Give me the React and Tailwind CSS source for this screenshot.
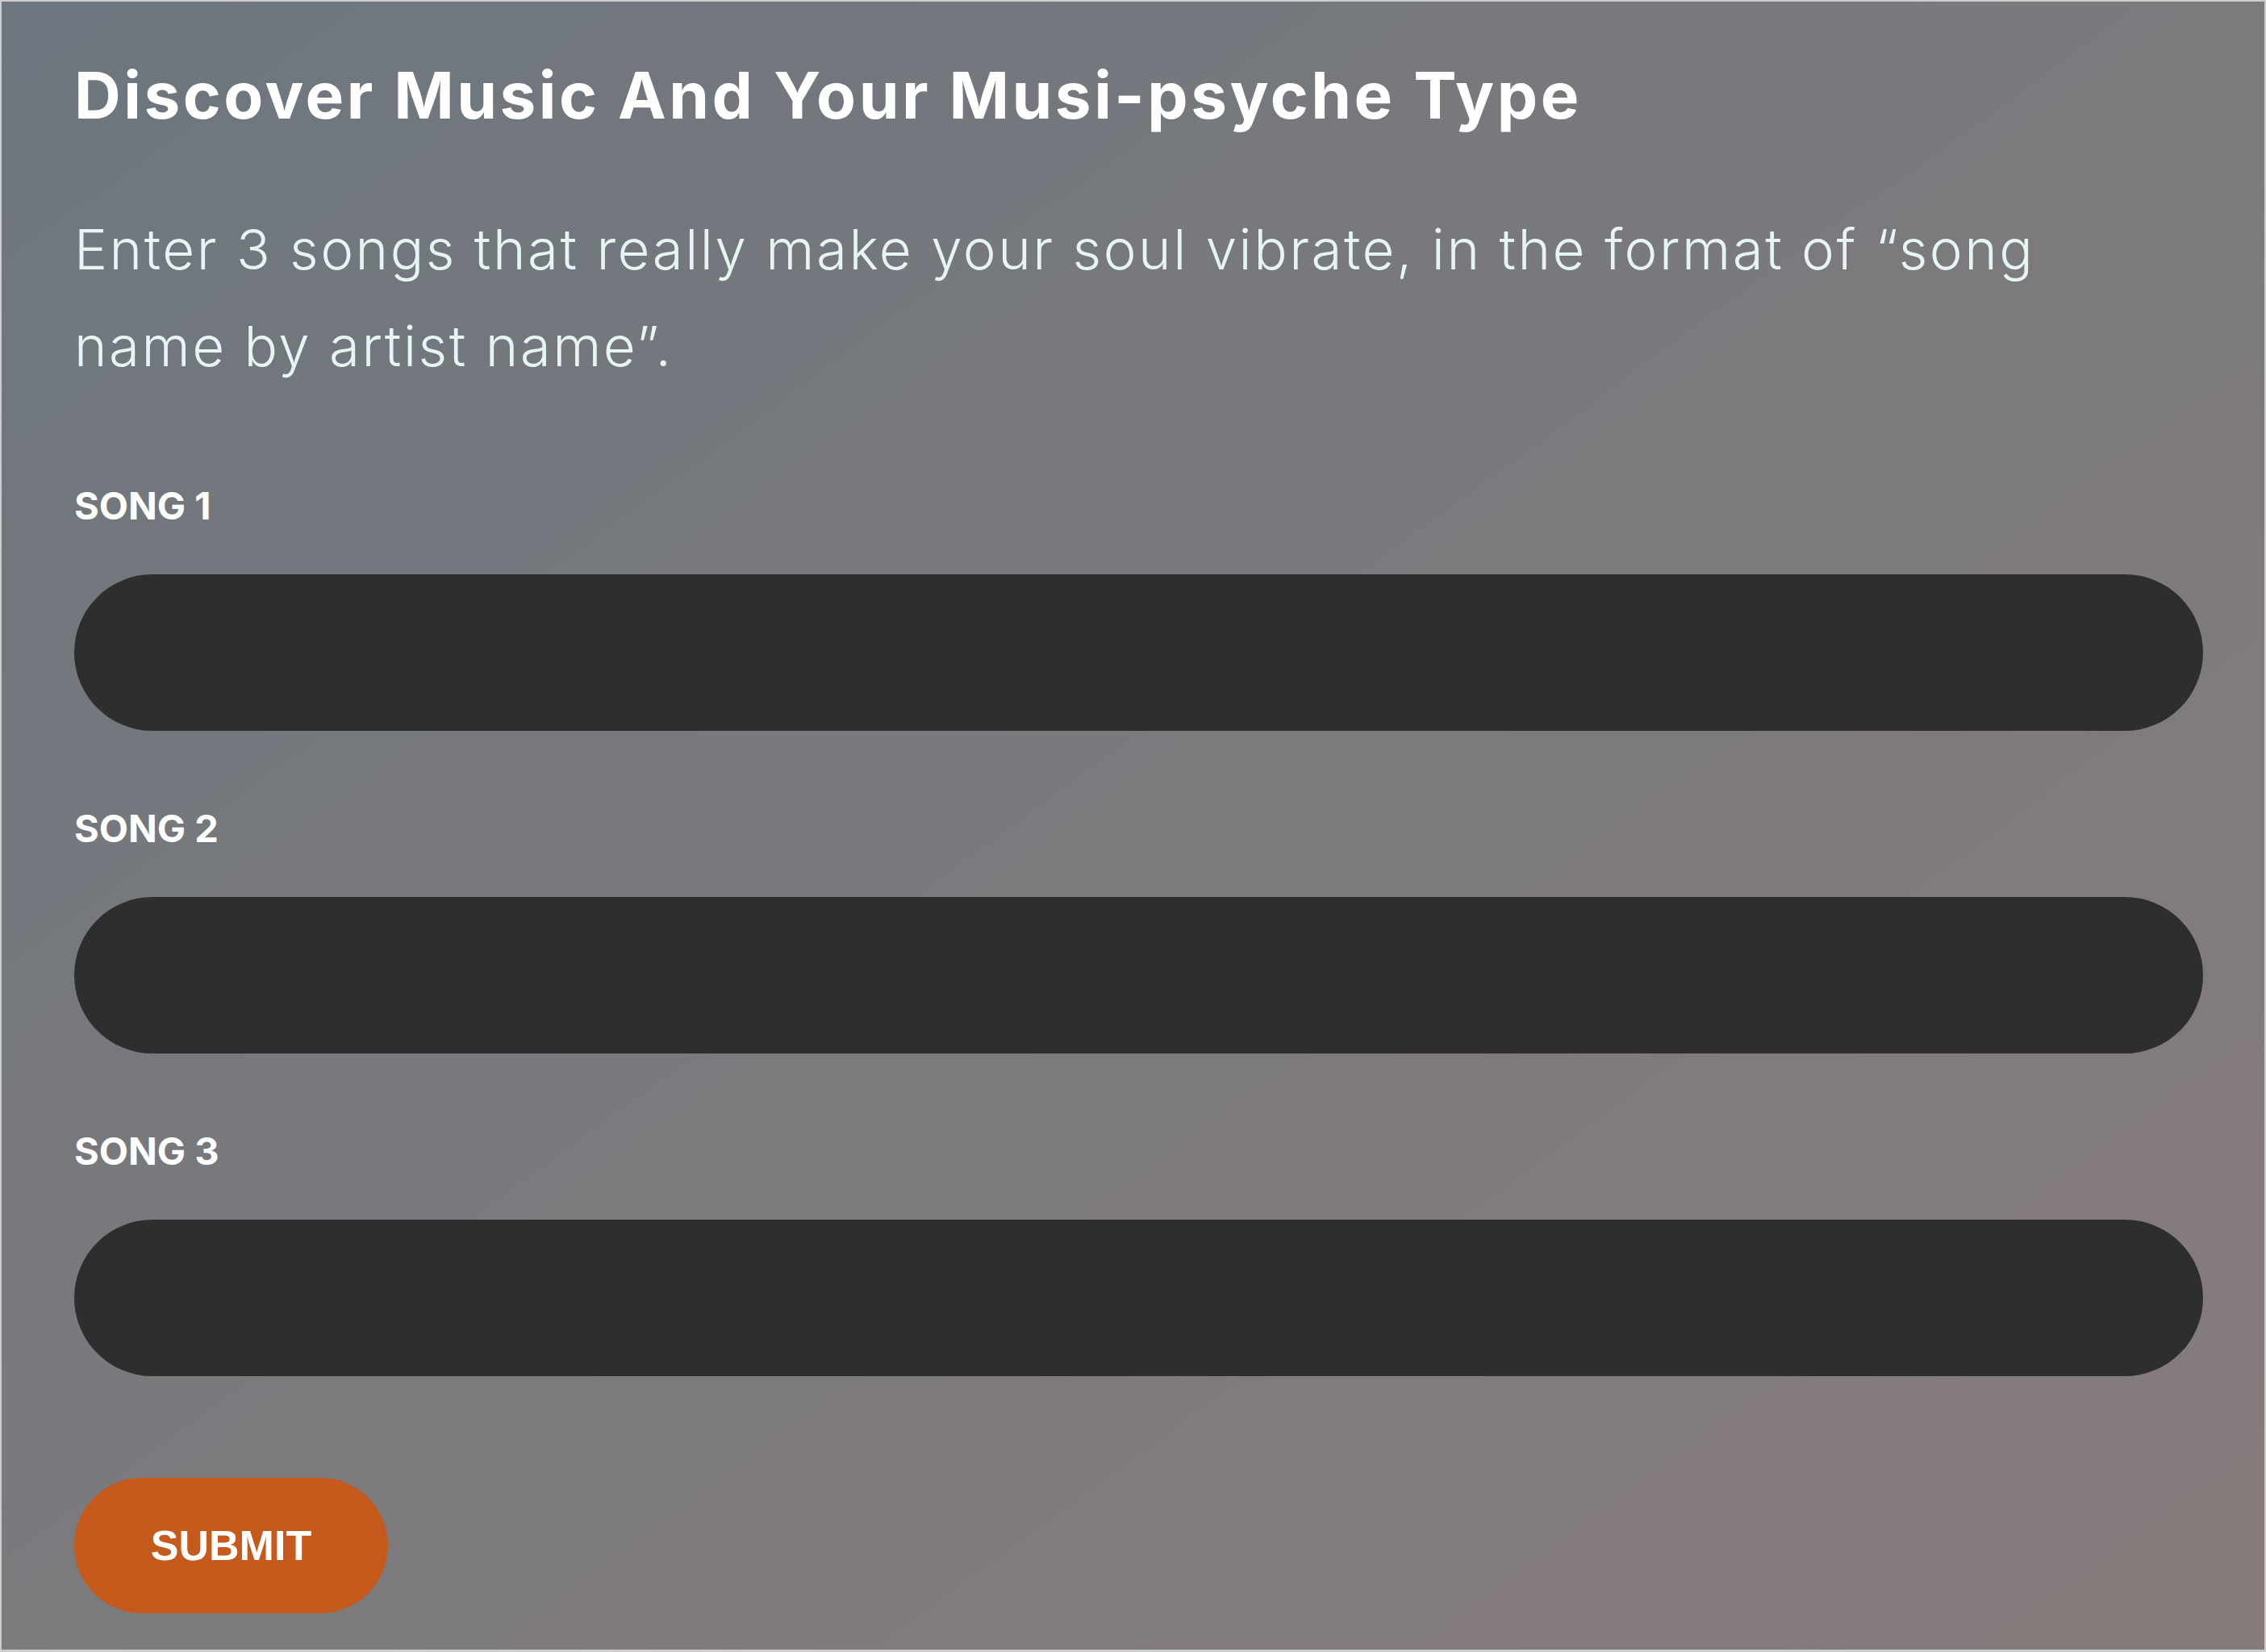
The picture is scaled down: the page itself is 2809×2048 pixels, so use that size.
import React from 'react';

// Three song inputs, one per row
const songs = ['SONG 1', 'SONG 2', 'SONG 3'];

const SongField = ({ label, first }) => (
    <div className={first ? 'mt-[114px]' : 'mt-[97px]'}>
        <label className="block font-['Inter',sans-serif] font-bold text-[47px] leading-[47px] text-white">
            {label}
        </label>
        <input
            type="text"
            className="mt-[62px] block w-full h-[194px] rounded-full bg-[#2e2e2e] outline-none px-[60px] text-white text-[48px]"
        />
    </div>
);

export default function App() {
    return (
        <div className="min-h-screen bg-[#cdcdcd] p-[2px]">
            <div className="h-[2043px] bg-linear-to-br from-[#6d767e] via-[#7b7a7d] to-[#867b7b] pl-[90px] pr-[76px] pt-[76px]">
                <h1 className="font-['Inter',sans-serif] font-bold text-[80px] leading-[80px] tracking-[3.5px] text-white">
                    Discover Music And Your Musi-psyche Type
                </h1>

                <p className="mt-[91px] font-['Inter',sans-serif] font-light text-[69px] leading-[120px] tracking-[2.5px] text-[#e6f4f3]">
                    Enter 3 songs that really make your soul vibrate, in the format of “song<br />
                    name by artist name”.
                </p>

                {songs.map((s, i) => (
                    <SongField key={s} label={s} first={i === 0} />
                ))}

                <button className="mt-[126px] w-[389px] h-[168px] rounded-full bg-[#c55a1c] font-['Liberation_Sans',sans-serif] font-bold text-[52px] text-white">
                    SUBMIT
                </button>
            </div>
        </div>
    );
}
